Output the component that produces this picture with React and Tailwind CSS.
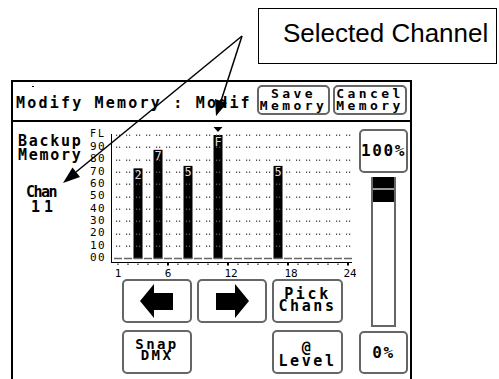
import React from 'react';

// chart coordinates (svg space): channel x, level y
const CH = (c) => 32 + (c - 1) * 10;
const LV = (l) => 136.5 - l * 1.235;

const bars = [
  { ch: 3, level: 73, tag: '2' },
  { ch: 5, level: 88, tag: '7' },
  { ch: 8, level: 75, tag: '5' },
  { ch: 11, level: 100, tag: 'F' },
  { ch: 17, level: 75, tag: '5' },
];

const channels = Array.from({ length: 24 }, (_, i) => i + 1);
const gridRows = [10, 20, 30, 40, 50, 60, 70, 80, 90, 100];
const axisLabels = [90, 80, 70, 60, 50, 40, 30, 20, 10, 0];
const xLabels = [
  { ch: 1, text: '1', dx: 0 },
  { ch: 6, text: '6', dx: 0 },
  { ch: 12, text: '12', dx: 3 },
  { ch: 18, text: '18', dx: 3 },
  { ch: 24, text: '24', dx: 2 },
];

const mono = "font-['DejaVu_Sans_Mono',monospace]";

function Btn({ className, children }) {
  return (
    <div
      className={
        'flex flex-col items-center justify-center rounded-[5px] border-2 border-[#666] bg-white text-black ' +
        className
      }
    >
      {children}
    </div>
  );
}

function Chart() {
  return (
    <svg
      width="270"
      height="157"
      viewBox="0 0 270 157"
      className="block"
      fontFamily="'DejaVu Sans Mono', monospace"
    >
      <text x="4" y="15" fontSize="10" letterSpacing="2">FL</text>
      {axisLabels.map((l) => (
        <text key={l} x="4" y={LV(l) + 2.5} fontSize="11" letterSpacing="1.5">
          {String(l).padStart(2, '0')}
        </text>
      ))}

      <line x1="25.5" y1="12" x2="25.5" y2="140" stroke="#000" />

      {bars.map((b) => (
        <rect key={b.ch} x={CH(b.ch) - 4.5} y={LV(b.level)} width="9" height={137 - LV(b.level)} fill="#000" />
      ))}

      {/* dotted grid */}
      {gridRows.map((l) =>
        channels.map((c) => (
          <g key={l + '-' + c} fill="#555">
            <rect x={CH(c) - 2} y={Math.round(LV(l)) - 0.5} width="1.2" height="1.5" />
            <rect x={CH(c) + 1} y={Math.round(LV(l)) - 0.5} width="1.2" height="1.5" />
          </g>
        ))
      )}

      {/* zero line dashes */}
      {channels.map((c) => (
        <line key={c} x1={CH(c) - 4} y1="136.5" x2={CH(c) + 4} y2="136.5" stroke="#666" strokeWidth="1.5" />
      ))}

      {bars.map((b) => (
        <text
          key={'t' + b.ch}
          x={CH(b.ch)}
          y={LV(b.level) + 10.5}
          fontSize="12"
          textAnchor="middle"
          fill="#ddd"
        >
          {b.tag}
        </text>
      ))}

      <line x1="25" y1="140.5" x2="266" y2="140.5" stroke="#000" />
      {channels.map((c) =>
        c % 6 === 0 ? (
          <rect key={c} x={CH(c) - 1} y="141" width="2" height="2.5" fill="#000" />
        ) : (
          <rect key={c} x={CH(c) - 0.5} y="141.5" width="1" height="1.5" fill="#000" />
        )
      )}
      {xLabels.map((x) => (
        <text key={x.text} x={CH(x.ch) + x.dx} y="155" fontSize="11" textAnchor="middle">
          {x.text}
        </text>
      ))}

      {/* selected channel marker */}
      <polygon points="127.5,5 136.5,5 132,10" fill="#000" />
    </svg>
  );
}

function LeftArrow() {
  return (
    <svg width="34" height="34" viewBox="0 0 34 34">
      <path d="M0 17 L14 0 L14 9 L33 9 L33 26 L14 26 L14 34 Z" fill="#000" />
    </svg>
  );
}

function RightArrow() {
  return (
    <svg width="34" height="34" viewBox="0 0 34 34">
      <path d="M34 17 L20 0 L20 9 L1 9 L1 26 L20 26 L20 34 Z" fill="#000" />
    </svg>
  );
}

export default function App() {
  return (
    <div className="relative w-[499px] h-[379px] overflow-hidden bg-white text-black">
      {/* callout */}
      <div className="h-[80px] pt-[8px] pl-[258px]">
        <div className="flex h-[56px] w-[239px] items-center border-[1.5px] border-black pl-[24px] pb-[7px] font-['Liberation_Sans',Arial,sans-serif] text-[26px] leading-none">
          Selected Channel
        </div>
      </div>

      {/* console screen */}
      <div className={'ml-[11px] h-[320px] w-[401px] border-2 border-black ' + mono}>
        <div className="relative flex h-[40px] items-start border-b-2 border-black">
          <span className="absolute left-[19px] top-[4px] h-px w-[2px] bg-black" />
          <div className="mt-[14px] w-[244px] whitespace-nowrap pl-[3px] text-[15px] font-bold leading-[15px] tracking-[2.2px]">
            Modify Memory : Modif
          </div>
          <div className="mt-[3px] flex gap-[3px]">
            <Btn className="h-[30px] w-[73px] text-[13px] font-bold leading-[12px] tracking-[3.4px]">
              <span>Save</span>
              <span>Memory</span>
            </Btn>
            <Btn className="h-[30px] w-[74px] text-[13px] font-bold leading-[12px] tracking-[3.4px]">
              <span>Cancel</span>
              <span>Memory</span>
            </Btn>
          </div>
        </div>

        <div className="flex">
          {/* labels */}
          <div className="w-[73px] pt-[12px]">
            <div className="pl-[5px] text-[15px] font-bold leading-[14px] tracking-[1.7px]">
              <div>Backup</div>
              <div>Memory</div>
            </div>
            <div className="mt-[23px] ml-[2px] w-[52px] text-center text-[15px] font-bold leading-[15px]">
              <div className="tracking-[-1.5px]">Chan</div>
              <div className="pl-[6px] tracking-[4px]">11</div>
            </div>
          </div>

          {/* chart and keys */}
          <div className="w-[270px]">
            <Chart />
            <div className="grid grid-cols-[70px_70px_71px] gap-x-[5px] gap-y-[7px] pl-[36px]">
              <Btn className="h-[44px]">
                <LeftArrow />
              </Btn>
              <Btn className="h-[44px]">
                <RightArrow />
              </Btn>
              <Btn className="h-[44px] pb-[3px] text-[15px] font-bold leading-[12px] tracking-[2.6px]">
                <span>Pick</span>
                <span>Chans</span>
              </Btn>
              <Btn className="h-[44px] pb-[5px] text-[14px] font-bold leading-[11px] tracking-[2.4px]">
                <span>Snap</span>
                <span>DMX</span>
              </Btn>
              <div />
              <Btn className="h-[44px] pt-[6px] text-[15px] font-bold leading-[13px] tracking-[2.6px]">
                <span>@</span>
                <span>Level</span>
              </Btn>
            </div>
          </div>

          {/* level fader */}
          <div className="w-[54px] pl-[3px]">
            <Btn className="mt-[7px] h-[44px] w-[49px] text-[16px] font-bold tracking-[1.6px]">100%</Btn>
            <div className="mt-[4px] ml-[12px] flex h-[150px] w-[25px] flex-col border-2 border-t-0 border-[#666]">
              <div className="flex h-[25px] flex-col bg-black pt-[11px]">
                <div className="h-[2px] bg-[#999]" />
              </div>
            </div>
            <Btn className="mt-[4px] h-[43px] w-[49px] text-[16px] font-bold tracking-[1.6px]">0%</Btn>
          </div>
        </div>
      </div>

      {/* callout leader lines */}
      <svg className="pointer-events-none absolute left-0 top-0" width="499" height="379" viewBox="0 0 499 379">
        <line x1="242" y1="36" x2="76" y2="172" stroke="#000" strokeWidth="1.5" />
        <polygon points="63,183 80,177 72.5,167.5" fill="#000" />
        <line x1="242" y1="36" x2="221" y2="101" stroke="#000" strokeWidth="1.5" />
        <polygon points="216,116 227,103 215,99" fill="#000" />
      </svg>
    </div>
  );
}
